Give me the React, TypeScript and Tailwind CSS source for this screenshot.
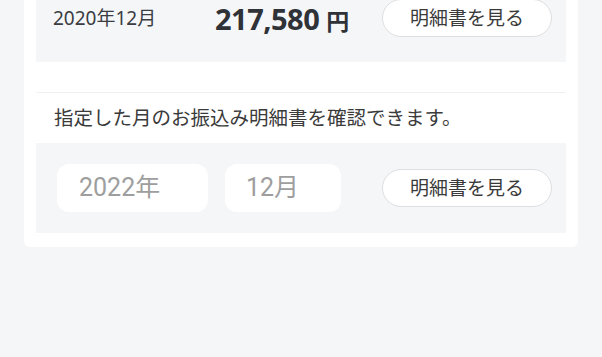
export default function App() {
  return (
    <div className="h-[357px] w-full overflow-hidden bg-[#f5f6f8] px-[24px] font-['Noto_Sans','Noto_Sans_CJK_JP',sans-serif]">
      <div className="-mt-[28px] rounded-b-[6px] bg-white px-[12px] pb-[14px]">
        {/* latest statement */}
        <div className="flex h-[90px] items-center bg-[#f5f6f8] pl-[17px] pr-[14px] pt-[2px]">
          <span className="w-[162px] text-[19px] leading-none text-[#3a3d42]">2020年12月</span>
          <span className="flex items-baseline text-[#2f3237]">
            <span className="text-[29px] font-bold leading-none tracking-[-0.5px]">217,580</span>
            <span className="ml-[7px] text-[23px] font-bold leading-none">円</span>
          </span>
          <button className="ml-auto h-[38px] w-[170px] rounded-full border border-[#dedfe1] bg-white text-[19px] text-[#3a3a3a]">
            明細書を見る
          </button>
        </div>

        <div className="mt-[30px] h-px bg-[#f0f0f2]" />

        <p className="pl-[18px] pt-[12px] pb-[12px] text-[19.5px] leading-[26px] text-[#3b3b3b]">
          指定した月のお振込み明細書を確認できます。
        </p>

        {/* month picker */}
        <div className="flex h-[90px] items-center bg-[#f5f6f8] pl-[21px] pr-[14px]">
          <div className="flex h-[48px] w-[151px] items-center rounded-[12px] bg-white pl-[22px] font-['Roboto','Noto_Sans_CJK_JP',sans-serif] text-[25px] text-[#9e9e9e]">
            2022年
          </div>
          <div className="ml-[17px] flex h-[48px] w-[116px] items-center rounded-[12px] bg-white pl-[21px] font-['Roboto','Noto_Sans_CJK_JP',sans-serif] text-[25px] text-[#9e9e9e]">
            12月
          </div>
          <button className="ml-auto h-[38px] w-[170px] rounded-full border border-[#dedfe1] bg-white text-[19px] text-[#3a3a3a]">
            明細書を見る
          </button>
        </div>
      </div>
    </div>
  )
}
